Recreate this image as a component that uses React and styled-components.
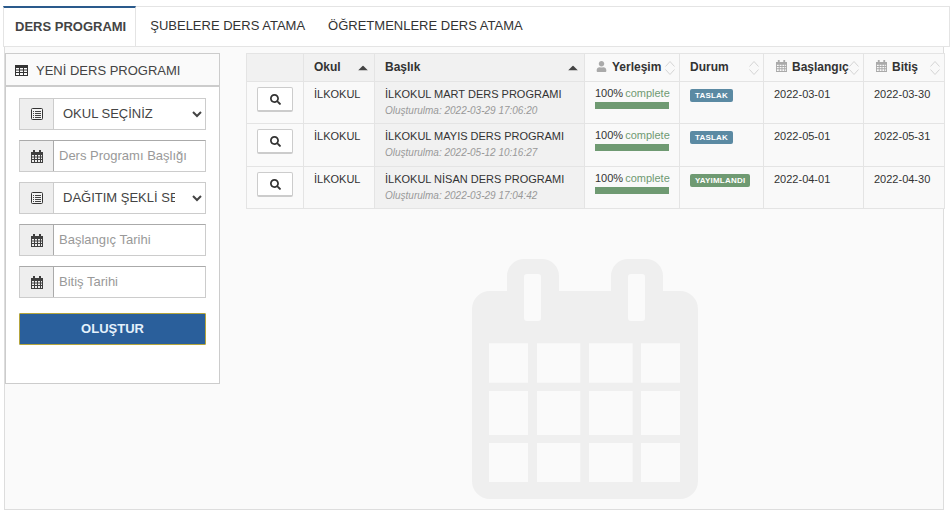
import React from 'react'
import styled, { createGlobalStyle } from 'styled-components'
import { FaSearch, FaUser } from 'react-icons/fa'

const GlobalStyle = createGlobalStyle`
  html, body {
    margin: 0;
    padding: 0;
    background: #fff;
    font-family: "Liberation Sans", Arial, sans-serif;
    overflow: hidden;
  }
`

const Page = styled.div`
  width: 951px;
  height: 517px;
  padding: 6px 0 0 3px;
  box-sizing: border-box;
`

const TabBar = styled.div`
  display: flex;
  width: 947px;
  height: 41px;
  box-sizing: border-box;
  border: 1px solid #e4e4e4;
  border-left: 0;
  background: #fff;
`

const Tab = styled.div`
  display: flex;
  align-items: center;
  box-sizing: border-box;
  padding: ${p => (p.$active ? '0 9px 2px 11px' : '0 9px 3px 14px')};
  font-size: 13px;
  color: ${p => (p.$active ? '#444' : '#333')};
  font-weight: ${p => (p.$active ? 700 : 400)};
  border-top: ${p => (p.$active ? '2px solid #2a5a8c' : '0')};
  border-left: ${p => (p.$active ? '1px solid #e4e4e4' : '0')};
  border-right: ${p => (p.$active ? '1px solid #e4e4e4' : '0')};
  margin-top: ${p => (p.$active ? '-1px' : '0')};
  height: ${p => (p.$active ? '41px' : '39px')};
`

const Content = styled.div`
  position: relative;
  display: flex;
  align-items: flex-start;
  gap: 26px;
  width: 940px;
  height: 463px;
  margin-left: 1px;
  box-sizing: border-box;
  padding-top: 6px;
  background: #fafafa;
  border-left: 1px solid #ddd;
  border-right: 1px solid #ddd;
  border-bottom: 1px solid #ddd;
`

const Watermark = styled.svg`
  position: absolute;
  left: 467px;
  top: 209px;
  width: 226px;
  height: 244px;
  color: #efefef;
`

const Panel = styled.div`
  position: relative;
  width: 215px;
  height: 331px;
  box-sizing: border-box;
  background: #fff;
  border: 1px solid #ccc;
  border-top: 0;
  flex: none;
`

const PanelHead = styled.div`
  display: flex;
  align-items: center;
  gap: 8px;
  height: 34px;
  box-sizing: border-box;
  padding: 1px 0 0 9px;
  background: #fafafa;
  border-top: 1px solid #ccc;
  border-bottom: 2px solid #ccc;
  font-size: 13px;
  color: #444;
`

const Form = styled.form`
  display: flex;
  flex-direction: column;
  gap: 10px;
  padding: 11px 13px 0;
`

const Group = styled.div`
  display: flex;
  height: 32px;
  box-sizing: border-box;
  border: 1px solid #ccc;
  border-top-color: ${p => (p.$dark ? '#aaa' : '#ccc')};
  background: #fff;
`

const Addon = styled.span`
  display: flex;
  align-items: center;
  justify-content: center;
  flex: none;
  width: 33px;
  background: #eee;
  border-right: 1px solid ${p => (p.$dark ? '#aaa' : '#ccc')};
  color: #555;
`

const Input = styled.input`
  flex: 1;
  min-width: 0;
  border: 0;
  outline: 0;
  padding: 0 5px 2px;
  font: 13px "Liberation Sans", Arial, sans-serif;
  background: #fff;
  &::placeholder {
    color: #999;
    opacity: 1;
  }
`

const Select = styled.select`
  flex: 1;
  min-width: 0;
  border: 0;
  outline: 0;
  padding: 0 14px 2px 5px;
  font: 13px "Liberation Sans", Arial, sans-serif;
  color: #444;
  background: #fff;
`

const SubmitButton = styled.button`
  height: 32px;
  margin-top: 5px;
  padding: 0 0 2px;
  border: 1px solid #b5a53c;
  border-radius: 1px;
  background: #2a5f9b;
  color: #e4f1fb;
  font: 700 13px "Liberation Sans", Arial, sans-serif;
`

const Table = styled.table`
  position: relative;
  table-layout: fixed;
  width: 698px;
  border-collapse: collapse;
  font-size: 11px;
  color: #333;
  flex: none;
`

const Th = styled.th`
  position: relative;
  height: 28px;
  padding: 0 0 1px 10px;
  box-sizing: border-box;
  text-align: left;
  white-space: nowrap;
  font-size: 12px;
  font-weight: 700;
  color: #333;
  background: ${p => (p.$sorted ? '#f1f1f1' : '#f9f9f9')};
  border: 1px solid #e4e4e4;
  border-bottom: 0;
  svg.head {
    font-size: 11px;
    color: #aaa;
    margin: 0 5px 0 2px;
    vertical-align: -1px;
  }
  svg.person {
    margin-left: 1px;
  }
`

const Td = styled.td`
  padding: 6px 0 0 10px;
  box-sizing: border-box;
  vertical-align: top;
  background: ${p => (p.$sorted ? '#f1f1f1' : '#f9f9f9')};
  border: 1px solid #e4e4e4;
`

const Row = styled.tr`
  height: ${p => p.$height}px;
`

const ActionCell = styled(Td)`
  padding: 5px 0 0 10px;
  background: #fafafa;
`

const ViewButton = styled.button`
  display: flex;
  align-items: center;
  justify-content: center;
  width: 36px;
  height: 25px;
  padding: 0;
  background: #fff;
  border: 1px solid #ccc;
  border-bottom-width: 2px;
  border-radius: 2px;
  font-size: 11px;
  color: #333;
`

const SortMark = styled.svg`
  position: absolute;
  right: ${p => p.$right}px;
  top: 50%;
  transform: translateY(-50%);
`

const Created = styled.div`
  margin-top: 5px;
  font-size: 10px;
  font-style: italic;
  color: #999;
`

const Percent = styled.div`
  margin-top: -1px;
  font-size: 11px;
  span {
    margin-left: 2px;
    color: #6f9a72;
  }
`

const Bar = styled.div`
  height: 7px;
  margin-top: 3px;
  margin-right: 10px;
  background: #6f9a72;
`

const Badge = styled.span`
  display: inline-block;
  padding: 0 5px;
  height: 13px;
  line-height: 13px;
  margin-top: 1px;
  border-radius: 2px;
  font-size: 8px;
  font-weight: 700;
  letter-spacing: 0.2px;
  color: #fff;
  background: ${p => (p.$tone === 'green' ? '#6f9a72' : '#5b8aa3')};
`

const rows = [
  { title: 'İLKOKUL MART DERS PROGRAMI', created: '2022-03-29 17:06:20', status: 'TASLAK', start: '2022-03-01', end: '2022-03-30', height: 42 },
  { title: 'İLKOKUL MAYIS DERS PROGRAMI', created: '2022-05-12 10:16:27', status: 'TASLAK', start: '2022-05-01', end: '2022-05-31', height: 43 },
  { title: 'İLKOKUL NİSAN DERS PROGRAMI', created: '2022-03-29 17:04:42', status: 'YAYIMLANDI', start: '2022-04-01', end: '2022-04-30', height: 42 },
]

const TableIcon = () => (
  <svg width="13" height="11" viewBox="0 0 13 11">
    <path
      fill="#333"
      fillRule="evenodd"
      d="M0 0h13v11H0z M1 3v1.5h3V3z M5 3v1.5h3V3z M9 3v1.5h3V3z M1 5.5V7h3V5.5z M5 5.5V7h3V5.5z M9 5.5V7h3V5.5z M1 8v2h3V8z M5 8v2h3V8z M9 8v2h3V8z"
    />
  </svg>
)

const ListIcon = () => (
  <svg width="12" height="12" viewBox="0 0 12 12">
    <rect x="0.5" y="0.5" width="11" height="11" rx="1" fill="#f4f4f4" stroke="#333" />
    <path d="M2 3.5h1M4 3.5h6M2 5.5h1M4 5.5h6M2 7.5h1M4 7.5h6M2 9.5h1M4 9.5h6" stroke="#444" />
  </svg>
)

const CalendarIcon = ({ className, color = '#3f3f3f', size = 12 }) => (
  <svg className={className} width={size} height={size + 1} viewBox="0 0 12 13">
    <path
      fill={color}
      fillRule="evenodd"
      d="M0 2h2V0h2v2h4V0h2v2h2v11H0z M1 5v1.5h2V5z M4 5v1.5h2V5z M7 5v1.5h2V5z M10 5v1.5h1V5z M1 7.5V9h2V7.5z M4 7.5V9h2V7.5z M7 7.5V9h2V7.5z M10 7.5V9h1V7.5z M1 10v2h2v-2z M4 10v2h2v-2z M7 10v2h2v-2z M10 10v2h1v-2z"
    />
  </svg>
)

const Caret = () => (
  <SortMark $right={6} width="10" height="5" viewBox="0 0 10 5">
    <path d="M0 5 L5 0 L10 5 Z" fill="#444" />
  </SortMark>
)

const BothWays = () => (
  <SortMark $right={4} width="10" height="15" viewBox="0 0 10 15">
    <path d="M0.5 6 L5 1 L9.5 6 M0.5 9 L5 14 L9.5 9" fill="none" stroke="#d4d4d4" />
  </SortMark>
)

const CalendarWatermark = () => {
  const xs = [[17, 39], [65, 43.3], [117, 43.7], [169, 39]]
  const ys = [[87.3, 39.4], [135, 44], [187, 39]]
  const cells = ys
    .flatMap(([y, h]) => xs.map(([x, w]) => `M${x} ${y}h${w}v${h}h${-w}z`))
    .join('')
  const body =
    'M18 35H35V20A17 17 0 0 1 52 3H70A17 17 0 0 1 87 20V35H139V20A17 17 0 0 1 156 3H174A17 17 0 0 1 191 20V35H208A18 18 0 0 1 226 53V225A18 18 0 0 1 208 243H18A18 18 0 0 1 0 225V53A18 18 0 0 1 18 35Z'
  const holes =
    'M55 18h11a3 3 0 0 1 3 3v41a3 3 0 0 1 -3 3h-11a3 3 0 0 1 -3 -3v-41a3 3 0 0 1 3 -3z' +
    'M159 18h11a3 3 0 0 1 3 3v41a3 3 0 0 1 -3 3h-11a3 3 0 0 1 -3 -3v-41a3 3 0 0 1 3 -3z'
  return (
    <Watermark viewBox="0 0 226 244">
      <path fill="currentColor" fillRule="evenodd" d={body + holes + cells} />
    </Watermark>
  )
}

export default function App() {
  return (
    <Page>
      <GlobalStyle />
      <TabBar>
        <Tab $active>DERS PROGRAMI</Tab>
        <Tab>ŞUBELERE DERS ATAMA</Tab>
        <Tab>ÖĞRETMENLERE DERS ATAMA</Tab>
      </TabBar>
      <Content>
        <CalendarWatermark />
        <Panel>
          <PanelHead>
            <TableIcon />
            YENİ DERS PROGRAMI
          </PanelHead>
          <Form>
            <Group>
              <Addon><ListIcon /></Addon>
              <Select defaultValue="okul">
                <option value="okul">OKUL SEÇİNİZ</option>
              </Select>
            </Group>
            <Group $dark>
              <Addon $dark><CalendarIcon /></Addon>
              <Input placeholder="Ders Programı Başlığı" />
            </Group>
            <Group>
              <Addon><ListIcon /></Addon>
              <Select defaultValue="dagitim">
                <option value="dagitim">DAĞITIM ŞEKLİ SEÇİNİZ</option>
              </Select>
            </Group>
            <Group $dark>
              <Addon $dark><CalendarIcon /></Addon>
              <Input placeholder="Başlangıç Tarihi" />
            </Group>
            <Group $dark>
              <Addon $dark><CalendarIcon /></Addon>
              <Input placeholder="Bitiş Tarihi" />
            </Group>
            <SubmitButton type="button">OLUŞTUR</SubmitButton>
          </Form>
        </Panel>
        <Table>
          <colgroup>
            <col width="57" />
            <col width="71" />
            <col width="210" />
            <col width="95" />
            <col width="84" />
            <col width="100" />
            <col width="81" />
          </colgroup>
          <thead>
            <tr>
              <Th $sorted />
              <Th $sorted>Okul<Caret /></Th>
              <Th $sorted>Başlık<Caret /></Th>
              <Th><FaUser className="head person" />Yerleşim<BothWays /></Th>
              <Th>Durum<BothWays /></Th>
              <Th><CalendarIcon className="head" color="#aaa" size={11} />Başlangıç<BothWays /></Th>
              <Th><CalendarIcon className="head" color="#aaa" size={11} />Bitiş<BothWays /></Th>
            </tr>
          </thead>
          <tbody>
            {rows.map(row => (
              <Row key={row.title} $height={row.height}>
                <ActionCell>
                  <ViewButton type="button"><FaSearch /></ViewButton>
                </ActionCell>
                <Td>İLKOKUL</Td>
                <Td $sorted>
                  {row.title}
                  <Created>Oluşturulma: {row.created}</Created>
                </Td>
                <Td>
                  <Percent>100%<span>complete</span></Percent>
                  <Bar />
                </Td>
                <Td>
                  <Badge $tone={row.status === 'YAYIMLANDI' ? 'green' : 'blue'}>{row.status}</Badge>
                </Td>
                <Td>{row.start}</Td>
                <Td>{row.end}</Td>
              </Row>
            ))}
          </tbody>
        </Table>
      </Content>
    </Page>
  )
}
